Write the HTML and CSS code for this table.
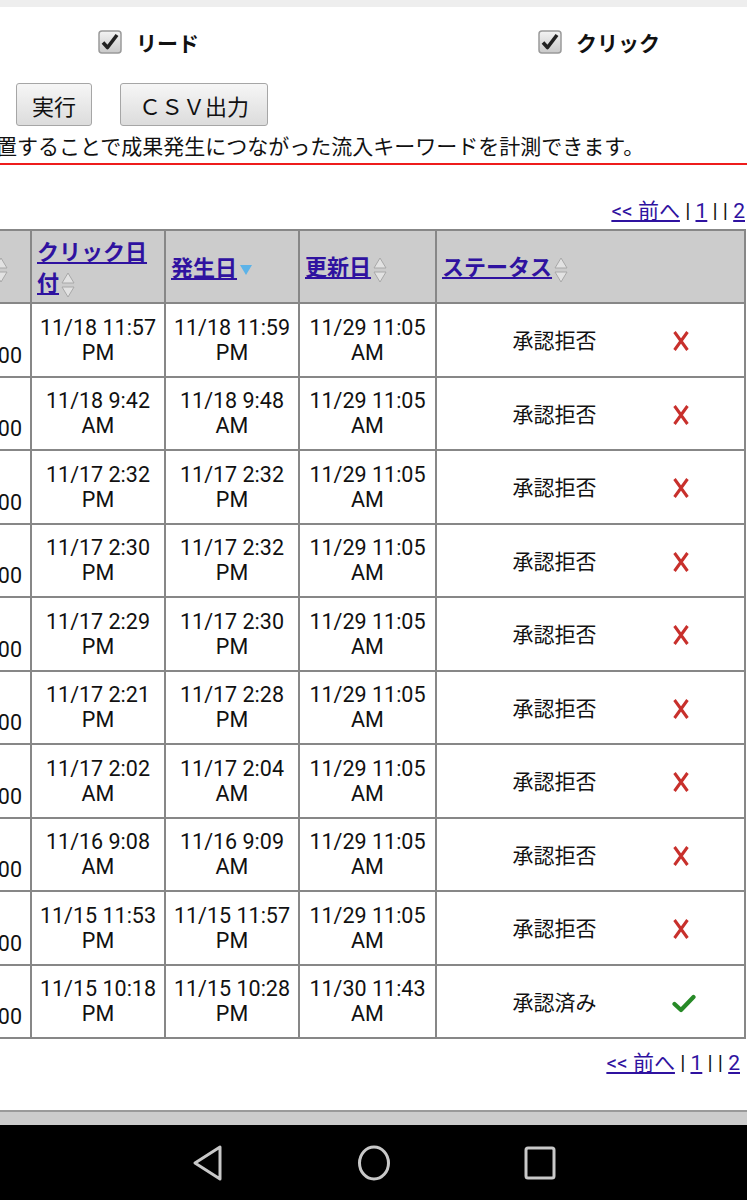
FILE: index.html
```html
<!DOCTYPE html>
<html>
<head>
	<meta charset="utf-8">
	<title>成果一覧</title>
	<link rel="stylesheet" href="styles.css">
</head>
<body>
	<div class="topband"></div>
	<div class="filters">
		<label class="check">
			<svg class="box" width="24" height="24" viewBox="0 0 24 24"><defs><linearGradient id="bx" x1="0" y1="0" x2="0" y2="1"><stop offset="0" stop-color="#f4f4f4"/><stop offset="1" stop-color="#c9c9c9"/></linearGradient></defs><rect x="1" y="1" width="22" height="22" rx="3" fill="url(#bx)" stroke="#9a9a9a" stroke-width="1.5"/><path d="M5 12.5 L9.5 17.5 L19 5" fill="none" stroke="#222" stroke-width="3.6" stroke-linejoin="round"/></svg>
			<b>リード</b>
		</label>
		<label class="check">
			<svg class="box" width="24" height="24" viewBox="0 0 24 24"><rect x="1" y="1" width="22" height="22" rx="3" fill="url(#bx)" stroke="#9a9a9a" stroke-width="1.5"/><path d="M5 12.5 L9.5 17.5 L19 5" fill="none" stroke="#222" stroke-width="3.6" stroke-linejoin="round"/></svg>
			<b>クリック</b>
		</label>
	</div>
	<div class="actions">
		<button class="btn">実行</button>
		<button class="btn wide">ＣＳＶ出力</button>
	</div>
	<p class="note">設置することで成果発生につながった流入キーワードを計測できます。</p>
	<div class="rule"></div>

	<div class="pager top"><a href="#">&lt;&lt; 前へ</a> | <a href="#">1</a> | | <a href="#">2</a></div>

	<div class="gridwrap">
	<table class="grid">
		<colgroup>
			<col class="c-amt"><col class="c-click"><col class="c-occur"><col class="c-upd"><col class="c-stat"><col class="c-icon">
		</colgroup>
		<thead>
			<tr>
				<th class="amt"><a href="#">報酬額</a><svg class="sort" width="14" height="26" viewBox="0 0 14 26"><path d="M7 1 L13 11 L1 11 Z M1 15 L13 15 L7 25 Z" fill="#e2e2e2" stroke="#a8a8a8" stroke-width="1"/></svg></th>
				<th><a href="#">クリック日付</a><svg class="sort" width="14" height="26" viewBox="0 0 14 26"><path d="M7 1 L13 11 L1 11 Z M1 15 L13 15 L7 25 Z" fill="#e2e2e2" stroke="#a8a8a8" stroke-width="1"/></svg></th>
				<th><a href="#">発生日</a><svg class="sort" width="14" height="14" viewBox="0 0 14 14"><path d="M1 2 L13 2 L7 12 Z" fill="#5cb3e8"/></svg></th>
				<th><a href="#">更新日</a><svg class="sort" width="14" height="26" viewBox="0 0 14 26"><path d="M7 1 L13 11 L1 11 Z M1 15 L13 15 L7 25 Z" fill="#e2e2e2" stroke="#a8a8a8" stroke-width="1"/></svg></th>
				<th colspan="2"><a href="#">ステータス</a><svg class="sort" width="14" height="26" viewBox="0 0 14 26"><path d="M7 1 L13 11 L1 11 Z M1 15 L13 15 L7 25 Z" fill="#e2e2e2" stroke="#a8a8a8" stroke-width="1"/></svg></th>
			</tr>
		</thead>
		<tbody>
			<tr><td class="amt"><span>¥1,000</span></td><td>11/18 11:57<br>PM</td><td>11/18 11:59<br>PM</td><td>11/29 11:05<br>AM</td><td class="stat">承認拒否</td><td class="icon"><svg width="18" height="22" viewBox="0 0 18 22"><path d="M2.5 2 L15.5 20 M15.5 2 L2.5 20" stroke="#c8302c" stroke-width="3"/></svg></td></tr>
			<tr><td class="amt"><span>¥1,000</span></td><td>11/18 9:42<br>AM</td><td>11/18 9:48<br>AM</td><td>11/29 11:05<br>AM</td><td class="stat">承認拒否</td><td class="icon"><svg width="18" height="22" viewBox="0 0 18 22"><path d="M2.5 2 L15.5 20 M15.5 2 L2.5 20" stroke="#c8302c" stroke-width="3"/></svg></td></tr>
			<tr><td class="amt"><span>¥1,000</span></td><td>11/17 2:32<br>PM</td><td>11/17 2:32<br>PM</td><td>11/29 11:05<br>AM</td><td class="stat">承認拒否</td><td class="icon"><svg width="18" height="22" viewBox="0 0 18 22"><path d="M2.5 2 L15.5 20 M15.5 2 L2.5 20" stroke="#c8302c" stroke-width="3"/></svg></td></tr>
			<tr><td class="amt"><span>¥1,000</span></td><td>11/17 2:30<br>PM</td><td>11/17 2:32<br>PM</td><td>11/29 11:05<br>AM</td><td class="stat">承認拒否</td><td class="icon"><svg width="18" height="22" viewBox="0 0 18 22"><path d="M2.5 2 L15.5 20 M15.5 2 L2.5 20" stroke="#c8302c" stroke-width="3"/></svg></td></tr>
			<tr><td class="amt"><span>¥1,000</span></td><td>11/17 2:29<br>PM</td><td>11/17 2:30<br>PM</td><td>11/29 11:05<br>AM</td><td class="stat">承認拒否</td><td class="icon"><svg width="18" height="22" viewBox="0 0 18 22"><path d="M2.5 2 L15.5 20 M15.5 2 L2.5 20" stroke="#c8302c" stroke-width="3"/></svg></td></tr>
			<tr><td class="amt"><span>¥1,000</span></td><td>11/17 2:21<br>PM</td><td>11/17 2:28<br>PM</td><td>11/29 11:05<br>AM</td><td class="stat">承認拒否</td><td class="icon"><svg width="18" height="22" viewBox="0 0 18 22"><path d="M2.5 2 L15.5 20 M15.5 2 L2.5 20" stroke="#c8302c" stroke-width="3"/></svg></td></tr>
			<tr><td class="amt"><span>¥1,000</span></td><td>11/17 2:02<br>AM</td><td>11/17 2:04<br>AM</td><td>11/29 11:05<br>AM</td><td class="stat">承認拒否</td><td class="icon"><svg width="18" height="22" viewBox="0 0 18 22"><path d="M2.5 2 L15.5 20 M15.5 2 L2.5 20" stroke="#c8302c" stroke-width="3"/></svg></td></tr>
			<tr><td class="amt"><span>¥1,000</span></td><td>11/16 9:08<br>AM</td><td>11/16 9:09<br>AM</td><td>11/29 11:05<br>AM</td><td class="stat">承認拒否</td><td class="icon"><svg width="18" height="22" viewBox="0 0 18 22"><path d="M2.5 2 L15.5 20 M15.5 2 L2.5 20" stroke="#c8302c" stroke-width="3"/></svg></td></tr>
			<tr><td class="amt"><span>¥1,000</span></td><td>11/15 11:53<br>PM</td><td>11/15 11:57<br>PM</td><td>11/29 11:05<br>AM</td><td class="stat">承認拒否</td><td class="icon"><svg width="18" height="22" viewBox="0 0 18 22"><path d="M2.5 2 L15.5 20 M15.5 2 L2.5 20" stroke="#c8302c" stroke-width="3"/></svg></td></tr>
			<tr><td class="amt"><span>¥1,000</span></td><td>11/15 10:18<br>PM</td><td>11/15 10:28<br>PM</td><td>11/30 11:43<br>AM</td><td class="stat">承認済み</td><td class="icon"><svg width="24" height="22" viewBox="0 0 24 22"><path d="M2.5 12 L9 18 L21.5 5" fill="none" stroke="#278a27" stroke-width="4.2" stroke-linejoin="round" stroke-linecap="round"/></svg></td></tr>
		</tbody>
	</table>
	</div>

	<div class="pager bottom"><a href="#">&lt;&lt; 前へ</a> | <a href="#">1</a> | | <a href="#">2</a></div>

	<div class="footbar"><a href="#">プライバシーポリシー</a>　<a href="#">利用規約</a>　<a href="#">会社概要</a>　<a href="#">お問い合わせ</a>　<a href="#">ヘルプ</a></div>
	<div class="navbar">
		<svg width="34" height="36" viewBox="0 0 34 36"><path d="M29 2 L29 34 L4 18 Z" fill="none" stroke="#c8c8c8" stroke-width="3" stroke-linejoin="round"/></svg>
		<svg width="34" height="36" viewBox="0 0 34 36"><ellipse cx="17" cy="18" rx="14.5" ry="16" fill="none" stroke="#c8c8c8" stroke-width="3"/></svg>
		<svg width="34" height="36" viewBox="0 0 34 36"><rect x="3" y="3" width="28" height="30" rx="2" fill="none" stroke="#c8c8c8" stroke-width="3"/></svg>
	</div>
</body>
</html>
```

FILE: styles.css
```css
body {
	margin: 0;
	width: 747px;
	height: 1200px;
	overflow: hidden;
	display: flex;
	flex-direction: column;
	font-family: Roboto, "Noto Sans CJK JP", sans-serif;
	color: #111;
	background: #fff;
}
a {
	color: #2f12a0;
}
.topband {
	height: 7px;
	flex-shrink: 0;
	background-color: #eeeeee;
}
.filters {
	display: flex;
	padding-left: 98px;
	margin-top: 22px;
	height: 26px;
}
.check {
	display: flex;
	flex-shrink: 0;
	align-items: center;
	gap: 14px;
	width: 440px;
	font-size: 21px;
}
.check b {
	font-family: "Noto Sans CJK JP", sans-serif;
	font-weight: bold;
}
.actions {
	display: flex;
	gap: 28px;
	padding-left: 16px;
	margin-top: 28px;
}
.btn {
	height: 43px;
	padding: 0 15px;
	font-family: "Noto Sans CJK JP", sans-serif;
	font-size: 22px;
	color: #111;
	background: linear-gradient(#f6f6f6, #dcdcdc);
	border: 1px solid #a6a6a6;
	border-radius: 3px;
}
.btn.wide {
	padding: 0 18px;
}
.note {
	margin: 6px 0 0 -25px;
	font-family: "Noto Sans CJK JP", sans-serif;
	font-size: 21px;
	line-height: 26px;
	white-space: nowrap;
}
.rule {
	margin-top: 5px;
	border-top: 2px solid #ee1c1c;
}
.pager {
	text-align: right;
	font-size: 21px;
	line-height: 26px;
	white-space: nowrap;
}
.pager.top {
	margin-top: 33px;
	margin-right: 2px;
}
.pager.bottom {
	margin-top: 11px;
	margin-right: 7px;
	flex: 1;
}
.gridwrap {
	margin-top: 5px;
	overflow: hidden;
	flex-shrink: 0;
}
.grid {
	margin-left: -90px;
	border-collapse: collapse;
	table-layout: fixed;
	width: 834px;
	font-size: 21.5px;
	line-height: 25px;
}
.c-amt { width: 120px; }
.c-click { width: 134px; }
.c-occur { width: 134px; }
.c-upd { width: 137px; }
.c-stat { width: 236px; }
.c-icon { width: 73px; }
.grid th, .grid td {
	border: 2px solid #878787;
	padding: 0 5px;
}
.grid th {
	height: 71px;
	background-color: #cccccc;
	text-align: left;
	font-size: 22px;
	line-height: 31px;
	font-family: "Noto Sans CJK JP", sans-serif;
	font-weight: bold;
}
.grid th.amt {
	text-align: right;
	padding-right: 22px;
}
.sort {
	vertical-align: middle;
	margin-left: 2px;
}
.grid td {
	height: 71.5px;
	text-align: center;
	vertical-align: middle;
}
.grid td.amt {
	text-align: right;
	vertical-align: bottom;
	padding: 0 8px 0 0;
}
.grid td.amt span {
	display: block;
	padding-bottom: 8px;
}
.grid td.stat {
	border-right: none;
	font-family: "Noto Sans CJK JP", sans-serif;
	font-size: 21px;
}
.grid td.icon {
	border-left: none;
	text-align: left;
	padding-left: 0;
}
.grid td.icon svg {
	vertical-align: middle;
}
.footbar {
	height: 15px;
	flex-shrink: 0;
	overflow: hidden;
	border-top: 2px solid #9a9a9a;
	background-color: #cccccc;
	padding: 12px 0 0 18px;
	box-sizing: border-box;
	font-size: 16px;
	line-height: 20px;
	white-space: nowrap;
}
.footbar a {
	color: #1b3fb0;
	text-decoration: none;
}
.navbar {
	height: 75px;
	flex-shrink: 0;
	background-color: #000;
	display: flex;
	justify-content: center;
	align-items: center;
	gap: 132px;
}
```
